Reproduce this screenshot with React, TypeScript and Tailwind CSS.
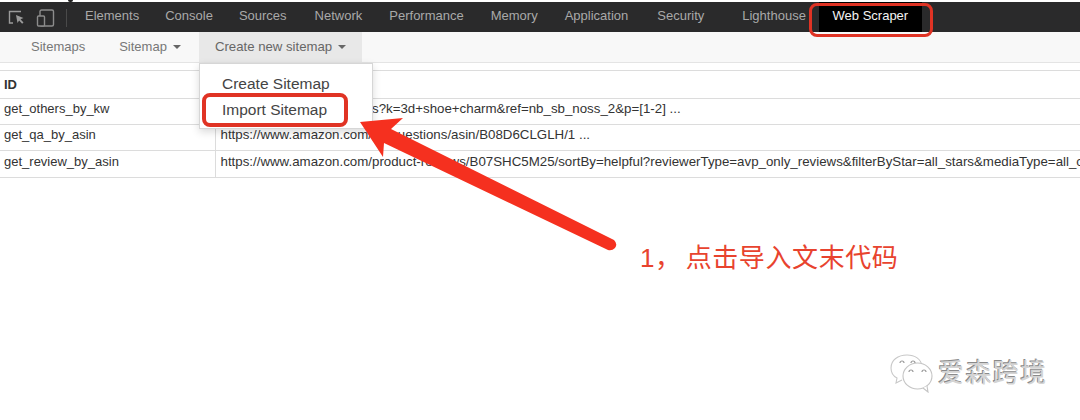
const sans = "font-['Liberation_Sans',Arial,sans-serif]";
const cjk = "font-['Liberation_Sans','Noto_Sans_CJK_SC',sans-serif]";

const tabs: [string, string][] = [
  ["Elements", "ml-[85px]"],
  ["Console", "ml-[26px]"],
  ["Sources", "ml-[26px]"],
  ["Network", "ml-[28px]"],
  ["Performance", "ml-[27px]"],
  ["Memory", "ml-[27px]"],
  ["Application", "ml-[27px]"],
  ["Security", "ml-[29px]"],
  ["Lighthouse", "ml-[38px]"],
];

const rows = [
  ["get_others_by_kw", "https://www.amazon.com/s?k=3d+shoe+charm&ref=nb_sb_noss_2&p=[1-2] ...", "h-[26px]"],
  ["get_qa_by_asin", "https://www.amazon.com/gp/questions/asin/B08D6CLGLH/1 ...", "h-[26px]"],
  [
    "get_review_by_asin",
    "https://www.amazon.com/product-reviews/B07SHC5M25/sortBy=helpful?reviewerType=avp_only_reviews&filterByStar=all_stars&mediaType=all_contents",
    "h-[27px]",
  ],
];

function Caret() {
  return <span className="ml-[6px] inline-block h-0 w-0 border-x-[4.5px] border-t-[4px] border-x-transparent border-t-[#666]" />;
}

export default function App() {
  return (
    <div className={`relative h-[420px] w-[1080px] overflow-hidden bg-white ${sans}`}>
      <div className="relative h-[2px] bg-white">
        <span className="absolute left-[68px] top-0 h-[2px] w-[5px] rounded-b-full bg-[#222]" />
      </div>
      <header className="relative flex h-[30px] items-center bg-[#2a2a2b] pb-[2px] text-[13px] text-[#a9a9a9]">
        <svg className="absolute left-[8px] top-[7px]" width="48" height="18" viewBox="0 0 48 18" fill="none">
          <path d="M13 2.5H1.5V14H5" stroke="#9a9a9a" strokeWidth="1.4" />
          <path d="M8 6l7.5 3-3 1.3 3 3.2-1.4 1.3-3-3.2L9.5 14z" fill="#9a9a9a" />
          <rect x="32" y="1" width="13.5" height="16" rx="1.5" stroke="#8c8c8c" strokeWidth="1.4" />
          <rect x="29.5" y="7" width="7" height="10" rx="1" fill="#2a2a2b" stroke="#8c8c8c" strokeWidth="1.4" />
        </svg>
        <span className="absolute left-[66px] top-[7px] h-[18px] w-px bg-[#4a4a4a]" />
        {tabs.map(([name, margin]) => (
          <span key={name} className={`${margin} whitespace-nowrap`}>
            {name}
          </span>
        ))}
        <span className="ml-[13px] -mb-[2px] flex h-[30px] w-[103px] items-center justify-center bg-black pb-[2px] text-[#f4f4f4]">Web Scraper</span>
      </header>

      <nav className="flex h-[31px] border-b border-[#e4e4e4] bg-[#f8f8f8] pl-[31px] text-[13px] text-[#777]">
        <span className="flex items-center">Sitemaps</span>
        <span className="ml-[34px] flex items-center">
          Sitemap
          <Caret />
        </span>
        <span className="ml-[18px] flex items-center bg-[#e8e8e8] px-[16px] text-[13.2px] text-[#666]">
          Create new sitemap
          <Caret />
        </span>
      </nav>

      <table className="mt-[7px] w-full table-fixed border-collapse text-[13px] text-[#333]">
        <colgroup>
          <col className="w-[215px]" />
          <col />
        </colgroup>
        <thead>
          <tr className="h-[28px] border-y border-[#dcdcdc]">
            <th className="pl-[4px] text-left text-[13px] font-bold">ID</th>
            <th />
          </tr>
        </thead>
        <tbody>
          {rows.map(([id, url, height]) => (
            <tr key={id} className={`${height} border-b border-[#dcdcdc]`}>
              <td className="border-r border-[#dcdcdc] pb-[5px] pl-[4px] leading-[20px]">{id}</td>
              <td className="overflow-hidden whitespace-nowrap pb-[5px] pl-[5px] text-[13.3px] leading-[20px]">{url}</td>
            </tr>
          ))}
        </tbody>
      </table>

      {/* dropdown */}
      <div className="absolute left-[199px] top-[63px] flex h-[66px] w-[174px] flex-col border border-[#d6d6d6] bg-white pl-[22px] pt-[7px] text-[15.5px] leading-[26px] text-[#444] shadow-[0_3px_8px_rgba(0,0,0,0.15)]">
        <span>Create Sitemap</span>
        <span>Import Sitemap</span>
      </div>

      {/* annotations */}
      <div className="absolute left-[202px] top-[93px] h-[34px] w-[146px] rounded-[8px] border-[4px] border-[#e03324]" />
      <div className="absolute left-[809px] top-[3px] h-[34px] w-[124px] rounded-[8px] border-[3.5px] border-[#e03324]" />
      <svg className="absolute left-0 top-0" width="1080" height="420" viewBox="0 0 1080 420" fill="none">
        <path
          d="M360 122 L403 118 L391 129 L614 240 Q618 244 615 248 Q612 251 608 250 L384 143 L383 157 Z"
          fill="#f5301f"
        />
      </svg>

      <p className={`absolute left-[640px] top-[241px] whitespace-nowrap text-[26px] leading-[34px] tracking-[0.6px] text-[#e8432e] ${cjk}`}>
        1，<span className="ml-[4px]">点击导入文末代码</span>
      </p>

      {/* watermark */}
      <div className="absolute left-[889px] top-[353px] flex items-center">
        <svg width="46" height="40" viewBox="0 0 46 40" fill="none">
          <path d="M33 13C32 6 26 2 18 2 9 2 2 7 2 15c0 4 2 8 6 10l-1 5 6-3" fill="#fff" stroke="#c8c8c8" strokeWidth="1.1" />
          <ellipse cx="28.5" cy="23" rx="14.5" ry="13" fill="#fff" stroke="#c4c4c4" strokeWidth="1.1" />
          <path d="M34 35l5 4-1-6" fill="#fff" stroke="#c4c4c4" strokeWidth="1.1" />
          <path d="M11 10a2 2 0 0 1 4 0M22 10a2 2 0 0 1 4 0M20 19a2 2 0 0 1 4 0M33 19a2 2 0 0 1 4 0" stroke="#999" strokeWidth="1.2" />
        </svg>
        <span className={`ml-[3px] text-[26px] leading-[34px] tracking-[1.4px] text-[#d4d4d4] [text-shadow:-1px_-1px_0_#8a8a8a] ${cjk}`}>爱森跨境</span>
      </div>
    </div>
  );
}
